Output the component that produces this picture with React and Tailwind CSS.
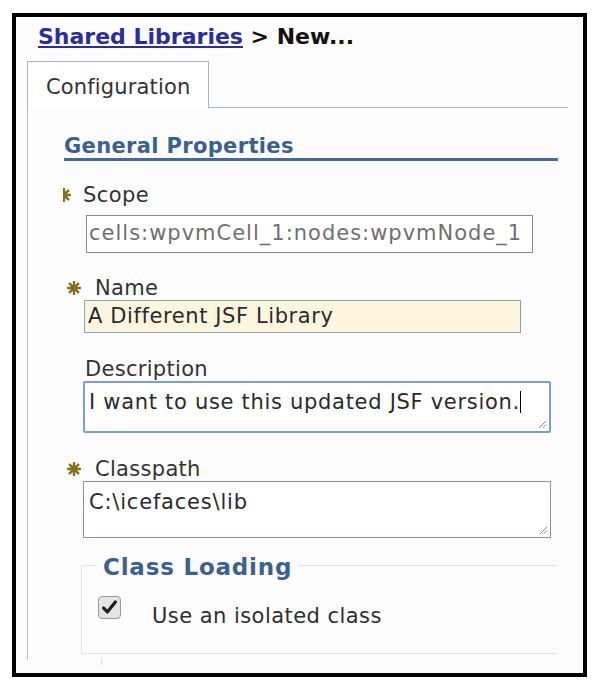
import React from 'react';

function Asterisk({ className }) {
  return (
    <svg viewBox="0 0 12 12" className={className}>
      <g stroke="#857016" strokeWidth="2" strokeLinecap="round">
        <line x1="6" y1="0.8" x2="6" y2="11.2" />
        <line x1="0.8" y1="6" x2="11.2" y2="6" />
        <line x1="2.3" y1="2.3" x2="9.7" y2="9.7" />
        <line x1="9.7" y1="2.3" x2="2.3" y2="9.7" />
      </g>
      <circle cx="6" cy="6" r="3" fill="#857016" />
    </svg>
  );
}

function Grip() {
  return (
    <svg className="absolute right-[2px] bottom-[2px] w-[10px] h-[10px]" viewBox="0 0 10 10">
      <line x1="2" y1="9" x2="9" y2="2" stroke="#8a8a8a" strokeWidth="1" />
      <line x1="5.5" y1="9" x2="9" y2="5.5" stroke="#8a8a8a" strokeWidth="1" />
    </svg>
  );
}

export default function App() {
  return (
    <div className="w-[600px] h-[690px] bg-white pt-[13px] pl-[12px] font-['DejaVu_Sans',Verdana,sans-serif] text-[#333]">
      <div className="w-[575px] h-[664px] border-4 border-black bg-[#fcfcfc] flex flex-col">
        {/* breadcrumb */}
        <div className="ml-[22px] mt-[5px] h-[30px] leading-[30px] text-[22px] font-bold whitespace-nowrap">
          <a className="text-[#2b2d9e] underline">Shared Libraries</a>
          <span className="text-[#111]"> &gt; New...</span>
        </div>

        {/* tabs */}
        <div className="flex mt-[9px] h-[47px] mr-[15px]">
          <div className="ml-[11px] w-[182px] border-t border-l border-r border-[#a9b0c8] bg-white pl-[18px] pt-[13px]">
            <span className="text-[21px] leading-[24px] tracking-[0.15px] text-[#333]">Configuration</span>
          </div>
          <div className="flex-1 border-b border-[#a9b0c8]" />
        </div>

        {/* panel */}
        <div className="ml-[11px] h-[552px] border-l border-[#b4bccf] pl-[36px]">
          <div className="mt-[25px] h-[25px] leading-[26px] text-[21px] tracking-[0.35px] font-bold text-[#3b6190] whitespace-nowrap">
            General Properties
          </div>
          <div className="w-[494px] h-[3px] bg-[#44699a]" />

          {/* Scope */}
          <div className="mt-[22px] flex items-center h-[24px] ml-[-1px]">
            <div className="w-[8px] h-[14px] overflow-hidden">
              <Asterisk className="w-[14px] h-[14px] ml-[-6px]" />
            </div>
            <span className="ml-[12px] text-[21px] leading-[24px] tracking-[0.4px]">Scope</span>
          </div>
          <div className="mt-[8px] ml-[22px] w-[447px] h-[38px] border border-[#8a8a8a] bg-white pl-[2px] flex items-center text-[21px] tracking-[1px] text-[#6f6f6f] whitespace-nowrap">
            cells:wpvmCell_1:nodes:wpvmNode_1
          </div>

          {/* Name */}
          <div className="mt-[23px] flex items-center h-[24px] ml-[3px]">
            <Asterisk className="w-[14px] h-[14px]" />
            <span className="ml-[14px] text-[21px] leading-[24px] tracking-[0.3px]">Name</span>
          </div>
          <div className="ml-[20px] w-[437px] h-[33px] border border-[#8fa1b4] bg-[#fdf6df] pl-[3px] flex items-center text-[21px] tracking-[0.6px] text-[#2a2a2a] whitespace-nowrap">
            A Different JSF Library
          </div>

          {/* Description */}
          <div className="mt-[25px] ml-[21px] h-[23px] text-[21px] leading-[23px] tracking-[0.3px]">Description</div>
          <div className="relative ml-[19px] w-[468px] h-[52px] border-2 border-[#7b9cd6] rounded-[2px] bg-white pl-[4px] pt-[7px] text-[21px] leading-[24px] tracking-[0.7px] text-[#2a2a2a] whitespace-nowrap">
            I want to use this updated JSF version.<span className="inline-block w-px h-[22px] bg-black align-[-4px]" />
            <Grip />
          </div>

          {/* Classpath */}
          <div className="mt-[24px] flex items-center h-[24px] ml-[3px]">
            <Asterisk className="w-[14px] h-[14px]" />
            <span className="ml-[14px] text-[21px] leading-[24px] tracking-[0.3px]">Classpath</span>
          </div>
          <div className="relative ml-[19px] w-[468px] h-[57px] border border-[#8d95a3] bg-white pl-[5px] pt-[8px] text-[21px] leading-[24px] tracking-[0.8px] text-[#2a2a2a] whitespace-nowrap">
            C:\icefaces\lib
            <Grip />
          </div>

          {/* Class Loading */}
          <fieldset className="mt-[12px] ml-[17px] w-[476px] border-l border-t border-b border-r-0 border-[#e2e2e2] px-[15px] pb-[25px]">
            <legend className="px-[6px] pt-[4px] text-[23px] leading-[26px] tracking-[0.8px] font-bold text-[#3b6190]">Class Loading</legend>
            <div className="flex items-start">
              <div className="mt-[16px] ml-[1px] w-[23px] h-[23px] rounded-[4px] border border-[#9a9a9a] bg-[#e4e4e4] flex items-center justify-center">
                <svg viewBox="0 0 16 16" className="w-[17px] h-[17px]">
                  <path d="M2.5 8.5 L6 12.2 L13.5 2.8" fill="none" stroke="#1e1e1e" strokeWidth="3" strokeLinecap="round" strokeLinejoin="round" />
                </svg>
              </div>
              <span className="ml-[31px] mt-[24px] text-[21px] leading-[24px] tracking-[0.45px] text-[#2e2e2e]">Use an isolated class</span>
            </div>
          </fieldset>
          <div className="ml-[37px] mt-[4px] w-px h-[7px] bg-[#dddddd]" />
        </div>
      </div>
    </div>
  );
}
